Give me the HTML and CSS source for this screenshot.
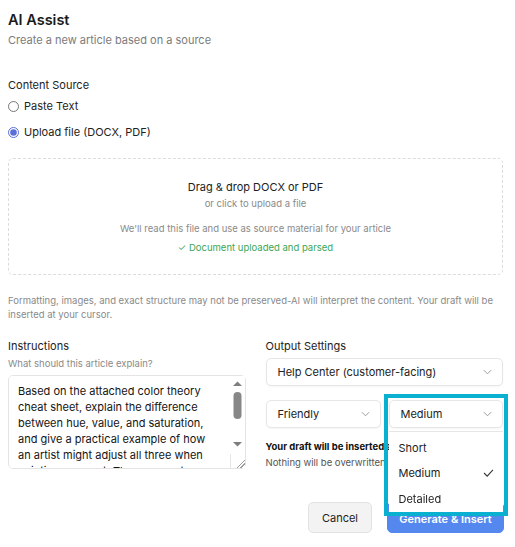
FILE: index.html
```html
<!DOCTYPE html>
<html lang="en">
<head>
<meta charset="utf-8">
<title>AI Assist</title>
<link rel="stylesheet" href="styles.css">
</head>
<body>
<main class="panel">
  <header class="panel-head">
    <h1 class="panel-title">AI Assist</h1>
    <p class="panel-sub">Create a new article based on a source</p>
  </header>

  <section class="source">
    <h2 class="field-label">Content Source</h2>
    <label class="radio-row"><input type="radio" name="src" class="radio"> Paste Text</label>
    <label class="radio-row"><input type="radio" name="src" class="radio" checked> Upload file (DOCX, PDF)</label>
  </section>

  <div class="dropzone">
    <div class="drop-title">Drag &amp; drop DOCX or PDF</div>
    <div class="drop-sub">or click to upload a file</div>
    <div class="drop-info">We'll read this file and use as source material for your article</div>
    <div class="drop-ok">&#10003; Document uploaded and parsed</div>
  </div>

  <p class="note">Formatting, images, and exact structure may not be preserved-AI will interpret the content. Your draft will be inserted at your cursor.</p>

  <div class="columns">
    <section class="col">
      <h2 class="field-label">Instructions</h2>
      <div class="hint">What should this article explain?</div>
      <div class="textarea-wrap">
        <textarea class="instructions">Based on the attached color theory cheat sheet, explain the difference between hue, value, and saturation, and give a practical example of how an artist might adjust all three when painting a sunset. Then suggest a simple exercise readers can try at home to practice seeing these differences.</textarea>
        <svg class="scrollbar" viewBox="0 0 15 78" width="15" height="78" aria-hidden="true">
          <polygon class="sb-arrow" points="3,10 7.5,5.5 12,10"/>
          <rect class="sb-thumb" x="3.5" y="16" width="8" height="27" rx="4"/>
          <polygon class="sb-arrow" points="3,66 12,66 7.5,70.5"/>
        </svg>
      </div>
    </section>

    <section class="col">
      <h2 class="field-label">Output Settings</h2>
      <button class="select wide" type="button">
        <span>Help Center (customer-facing)</span>
        <svg class="chev" viewBox="0 0 10 6" width="9" height="6"><polyline points="1,1 5,5 9,1"/></svg>
      </button>
      <div class="select-row">
        <button class="select" type="button">
          <span>Friendly</span>
          <svg class="chev" viewBox="0 0 10 6" width="9" height="6"><polyline points="1,1 5,5 9,1"/></svg>
        </button>
        <div class="picker">
          <button class="select" type="button">
            <span>Medium</span>
            <svg class="chev" viewBox="0 0 10 6" width="9" height="6"><polyline points="1,1 5,5 9,1"/></svg>
          </button>
          <ul class="menu">
            <li class="menu-item">Short</li>
            <li class="menu-item">Medium
              <svg class="tick" viewBox="0 0 12 9" width="11" height="8"><polyline points="1,4.5 4.5,8 11,1"/></svg>
            </li>
            <li class="menu-item">Detailed</li>
          </ul>
          <div class="focus-ring"></div>
        </div>
      </div>
      <div class="insert-note">
        <strong>Your draft will be inserted at your cursor.</strong>
        <span>Nothing will be overwritten.</span>
      </div>
    </section>
  </div>

  <footer class="actions">
    <button class="btn btn-cancel" type="button">Cancel</button>
    <button class="btn btn-primary" type="button">Generate &amp; Insert</button>
  </footer>
</main>
</body>
</html>
```

FILE: styles.css
```css
* { box-sizing: border-box; }

html, body {
  margin: 0;
  background: #fff;
}

body {
  font-family: Inter, "Noto Sans", sans-serif;
  color: #222;
  font-size: 11px;
}

.panel {
  width: 495px;
  margin-left: 8px;
  padding-top: 10px;
}

.panel-title {
  margin: 0;
  font-size: 14.5px;
  line-height: 20px;
  font-weight: 600;
  color: #1b1b1b;
}

.panel-sub {
  margin: 2px 0 0;
  font-size: 11px;
  line-height: 16px;
  color: #7b7b7b;
}

.field-label {
  margin: 0;
  font-size: 11px;
  line-height: 16px;
  font-weight: 400;
  color: #222;
}

.source { margin-top: 29px; }

.radio-row {
  display: flex;
  align-items: center;
  gap: 5px;
  height: 20px;
  margin-top: 3px;
  font-size: 11px;
  color: #222;
}
.radio-row + .radio-row { margin-top: 6px; }

.radio {
  margin: 0;
  width: 11px;
  height: 11px;
  accent-color: #5b6fd8;
}

.dropzone {
  margin-top: 16px;
  height: 117px;
  border: 1px dashed #dcdcdc;
  border-radius: 5px;
  display: flex;
  flex-direction: column;
  align-items: center;
  padding-top: 20px;
}

.drop-title {
  font-size: 11px;
  line-height: 16px;
  color: #222;
}
.drop-sub {
  margin-top: 2px;
  font-size: 9.5px;
  line-height: 14px;
  color: #8a8a8a;
}
.drop-info {
  margin-top: 11px;
  font-size: 9.5px;
  line-height: 14px;
  color: #8a8a8a;
}
.drop-ok {
  margin-top: 5px;
  font-size: 9.5px;
  line-height: 14px;
  color: #3aa655;
}

.note {
  margin: 19px 0 0;
  font-size: 9.5px;
  line-height: 13.5px;
  color: #8a8a8a;
}

.columns {
  margin-top: 17px;
  display: grid;
  grid-template-columns: 1fr 1fr;
  column-gap: 20px;
}

.col { min-width: 0; }

.hint {
  margin-top: 3px;
  font-size: 9.5px;
  line-height: 14px;
  color: #8a8a8a;
}

.textarea-wrap {
  position: relative;
  margin-top: 4px;
}

.instructions {
  display: block;
  width: 100%;
  height: 94px;
  padding: 7px 24px 7px 9px;
  border: 1px solid #e4e4e4;
  border-radius: 5px;
  font-family: Inter, "Noto Sans", sans-serif;
  font-size: 11px;
  line-height: 16px;
  color: #141414;
  resize: vertical;
  overflow-y: scroll;
}

/* resize grip in the bottom-right corner */
.instructions::-webkit-scrollbar-corner {
  background: #fff;
}
.instructions::-webkit-resizer {
  background:
    linear-gradient(135deg, transparent 68%, #9a9a9a 68%, #9a9a9a 73%, transparent 73%, transparent 82%, #9a9a9a 82%, #9a9a9a 87%, transparent 87%),
    #fff;
  border-top: 1px solid #e6e6e6;
  border-left: 1px solid #e6e6e6;
}

/* vertical scrollbar drawn over the textarea's right gutter */
.scrollbar {
  position: absolute;
  top: 1px;
  right: 1px;
  background: #fff;
  pointer-events: none;
}
.sb-arrow { fill: #7e7e7e; }
.sb-thumb { fill: #878787; }

.select {
  display: flex;
  align-items: center;
  justify-content: space-between;
  width: 100%;
  height: 28px;
  padding: 0 10px 0 11px;
  background: #fff;
  border: 1px solid #e6e6e6;
  border-radius: 5px;
  box-shadow: 0 1px 2px rgba(0,0,0,0.04);
  font-family: inherit;
  font-size: 11px;
  color: #222;
  text-align: left;
}
.select.wide { margin-top: 4px; }

.chev {
  fill: none;
  stroke: #8f8f8f;
  stroke-width: 1;
}

.select-row {
  margin-top: 14px;
  display: grid;
  grid-template-columns: 115px 1fr;
  column-gap: 8px;
}

.picker { position: relative; }

.menu {
  position: absolute;
  top: 31px;
  left: 0;
  right: 0;
  margin: 0;
  padding: 3px 0 2px;
  list-style: none;
  background: #fff;
  border-top: 1px solid #e6e6e6;
  z-index: 2;
}

.menu-item {
  display: flex;
  align-items: center;
  justify-content: space-between;
  height: 25.5px;
  padding: 0 9px 0 10px;
  font-size: 11px;
  color: #222;
}

.tick {
  fill: none;
  stroke: #333;
  stroke-width: 1.2;
}

.focus-ring {
  position: absolute;
  top: -6px;
  left: -5px;
  right: -5px;
  height: 122px;
  border: 4px solid #0ab0cf;
  z-index: 3;
  pointer-events: none;
}

.insert-note {
  margin-top: 12px;
  display: flex;
  flex-direction: column;
  gap: 3px;
  font-size: 9.5px;
  line-height: 13px;
  white-space: nowrap;
}
.insert-note strong { font-weight: 700; color: #111; }
.insert-note span { color: #555; }

.actions {
  margin-top: 33px;
  display: flex;
  justify-content: flex-end;
  gap: 15px;
}

.btn {
  height: 31px;
  border-radius: 5px;
  font-family: inherit;
  font-size: 11px;
  padding: 0 10px;
  white-space: nowrap;
}

.btn-cancel {
  width: 64px;
  background: #f3f3f3;
  border: 1px solid #e2e2e2;
  color: #222;
}

.btn-primary {
  width: 117px;
  margin-right: -1px;
  background: #5588ef;
  border: 1px solid #5588ef;
  color: #fff;
  font-weight: 600;
  padding-top: 2px;
}
```
